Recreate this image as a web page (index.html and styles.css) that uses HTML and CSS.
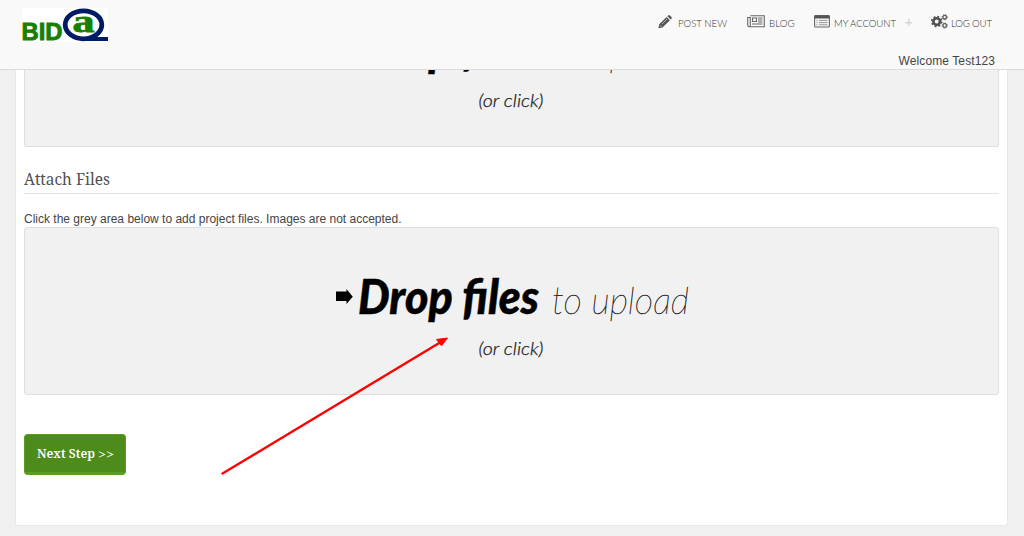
FILE: index.html
```html
<!DOCTYPE html>
<html lang="en">
<head>
<meta charset="utf-8">
<title>BidQA - Attach Files</title>
<link rel="stylesheet" href="styles.css">
</head>
<body>
<header class="header">
  <a class="logo"><svg width="88" height="34" viewBox="0 0 88 34" role="img" aria-label="BIDQ">
    <path class="logo-bg" d="M0 0h86v34H0z"/>
    <text class="logo-bid" x="-.5" y="31.5" textLength="41" lengthAdjust="spacingAndGlyphs">BID</text>
    <ellipse class="logo-ring" cx="61.5" cy="16.8" rx="18.3" ry="14"/>
    <path class="logo-tail" d="M62 29h24v4H62z"/>
    <text class="logo-a" x="50.5" y="23.5" textLength="22" lengthAdjust="spacingAndGlyphs">a</text>
  </svg></a>
  <nav class="nav">
    <a class="nav-item post"><svg width="14" height="14" viewBox="0 0 14 14"><path class="ink" d="M.4 13.3l.8-4L8.6 2l3.3 3.3-7.4 7.3zM9.4 1.2l.8-.8q.9-.6 1.7.1l1.6 1.6q.7.9 0 1.7l-.8.8z"/><path class="cut" d="M1.8 10l1.9 1.9M4 9l5-5"/></svg><svg class="label" width="49" height="14"><text x="0" y="11" textLength="49">POST NEW</text></svg></a>
    <a class="nav-item blog"><svg width="18" height="13" viewBox="0 0 18 13"><path class="line" d="M3.3.7h14v11H2.2q-1.5 0-1.5-1.5V2.5h2.6v7.8q0 1.4-1.1 1.4M5.5 3h4v3.5h-4zM11 3h4.5M11 5h4.5M11 7h4.5M5 9h10.5"/></svg><svg class="label" width="26" height="14"><text x="0" y="11" textLength="25.5">BLOG</text></svg></a>
    <a class="nav-item account"><svg width="16" height="13" viewBox="0 0 16 13"><rect class="line" x=".6" y=".6" width="14.8" height="11.4" rx="1"/><path class="ink" d="M.5.5h15v3H.5z"/><path class="line thin" d="M2.4 5.4h1.2M5 5.4h8.6M2.4 7.6h1.2M5 7.6h8.6M2.4 9.8h1.2M5 9.8h8.6"/></svg><svg class="label" width="63" height="14"><text x="0" y="11" textLength="62">MY ACCOUNT</text></svg><span class="plus"></span></a>
    <a class="nav-item logout"><svg width="17" height="15" viewBox="0 0 17 15"><circle class="gear" cx="5.7" cy="7.5" r="3.3"/><circle class="teeth" cx="5.7" cy="7.5" r="5"/><circle class="gear-small" cx="13.7" cy="3.2" r="1.8"/><circle class="teeth-small" cx="13.7" cy="3.2" r="2.6"/><circle class="gear-small" cx="13.7" cy="11.5" r="1.8"/><circle class="teeth-small" cx="13.7" cy="11.5" r="2.6"/></svg><svg class="label" width="42" height="14"><text x="0" y="11" textLength="41">LOG OUT</text></svg></a>
  </nav>
  <p class="welcome">Welcome Test123</p>
</header>
<main class="panel">
  <div class="dropzone dropzone-top">
    <svg class="message" width="360" height="168" viewBox="332 227 360 168">
      <path d="M336 291.5h10.5V289l6.3 7.7-6.3 7.3v-3H336z"/>
      <text class="drop" x="358" y="314" textLength="181" lengthAdjust="spacingAndGlyphs">Drop files</text>
      <text class="upload" x="552" y="314" textLength="137" lengthAdjust="spacingAndGlyphs">to upload</text>
      <text class="click" x="478.5" y="354.5" textLength="65" lengthAdjust="spacingAndGlyphs">(or click)</text>
    </svg>
  </div>
  <h2 class="title"><svg width="87" height="24"><text x="0" y="17.5" textLength="86" lengthAdjust="spacingAndGlyphs">Attach Files</text></svg></h2>
  <p class="hint">Click the grey area below to add project files. Images are not accepted.</p>
  <div class="dropzone">
    <svg class="message" width="360" height="168" viewBox="332 227 360 168">
      <path d="M336 291.5h10.5V289l6.3 7.7-6.3 7.3v-3H336z"/>
      <text class="drop" x="358" y="314" textLength="181" lengthAdjust="spacingAndGlyphs">Drop files</text>
      <text class="upload" x="552" y="314" textLength="137" lengthAdjust="spacingAndGlyphs">to upload</text>
      <text class="click" x="478.5" y="354.5" textLength="65" lengthAdjust="spacingAndGlyphs">(or click)</text>
    </svg>
  </div>
  <button class="next"><svg width="78" height="22"><text x="0" y="15" textLength="58" lengthAdjust="spacingAndGlyphs">Next Step</text><text class="arrows" x="61" y="16" textLength="16" lengthAdjust="spacingAndGlyphs">&gt;&gt;</text></svg></button>
</main>
<svg class="pointer" width="240" height="150" viewBox="215 330 240 150"><path class="shaft" d="M222.5 473.5L440 342.5"/><path class="tip" d="M447.5 338l-6 7.8-5-6.3z"/></svg>
</body>
</html>
```
FILE: styles.css
```css
* { box-sizing: border-box; }
body {
  margin: 0;
  height: 536px;
  overflow: hidden;
  position: relative;
  background: #f0f0f0;
  color: #444;
  font: 12px/16px "Liberation Sans", Arial, sans-serif;
}
svg { display: block; flex: none; overflow: visible; }
.header {
  height: 70px;
  background: #f9f9f9;
  border-bottom: 1px solid #dcdcdc;
  display: grid;
  grid-template-columns: 1fr auto;
  grid-template-rows: 53px 16px;
}
.logo { padding: 8px 0 0 22px; }
.logo-bg { fill: #fff; }
.logo-bid { font: bold 24px "Liberation Sans", sans-serif; fill: #188000; stroke: #188000; stroke-width: .9; }
.logo-ring { fill: #fff; stroke: #001b65; stroke-width: 4.8; }
.logo-tail { fill: #001b65; }
.logo-a { font: bold 31px "Liberation Serif", serif; fill: #188000; stroke: #188000; stroke-width: .8; }
.nav { display: flex; padding: 14px 31px 0 0; height: 40px; }
.nav-item { display: flex; }
.nav-item > svg:first-child { margin-top: 1px; }
.label { margin: 2px 0 0 6px; font: 300 9.7px Lato, sans-serif; fill: #333; }
.blog { margin-left: 20px; }
.blog .label { margin-left: 4px; }
.account { margin-left: 19px; }
.account .label { margin-left: 4px; }
.logout { margin-left: 19px; }
.logout > svg:first-child { margin-top: 0; }
.logout .label { margin-left: 3px; }
.plus {
  width: 7px;
  height: 7px;
  margin: 5px 0 0 8px;
  background: linear-gradient(#d4d4d4, #d4d4d4) center / 7px 1.5px no-repeat, linear-gradient(#d4d4d4, #d4d4d4) center / 1.5px 7px no-repeat;
}
.ink { fill: #555; }
.cut { stroke: #ddd; stroke-width: .7; fill: none; }
.line { fill: none; stroke: #666; stroke-width: 1.1; }
.thin { stroke: #888; stroke-width: .9; }
.gear { fill: none; stroke: #505050; stroke-width: 2.6; }
.teeth { fill: none; stroke: #505050; stroke-width: 1.5; stroke-dasharray: 2 1.927; }
.gear-small { fill: none; stroke: #606060; stroke-width: 1.3; }
.teeth-small { fill: none; stroke: #606060; stroke-width: 1; stroke-dasharray: 1.1 .942; }
.welcome {
  grid-column: 1 / 3;
  margin: 0;
  padding-right: 29px;
  text-align: right;
  letter-spacing: .1px;
}
.panel {
  margin: 0 16px 0 15px;
  height: 456px;
  padding: 0 8px;
  background: #fff;
  border: solid #e8e8e8;
  border-width: 0 1px 1px;
  border-radius: 0 0 3px 3px;
  display: flex;
  flex-direction: column;
}
.dropzone {
  height: 168px;
  flex: none;
  border: 1px solid #dedede;
  border-radius: 3px;
  background: #f1f1f1;
  display: flex;
  justify-content: center;
  align-items: flex-end;
  overflow: hidden;
}
.dropzone-top { height: 77px; border-top: 0; border-radius: 0 0 3px 3px; }
.message { margin-bottom: -1px; }
.drop { font: italic 900 48px Lato, sans-serif; stroke: #000; stroke-width: .5; }
.upload { font: italic 100 38px Lato, sans-serif; fill: #111; stroke: #222; stroke-width: .4; }
.click { font: italic 300 18.5px Lato, sans-serif; fill: #111; stroke: #222; stroke-width: .25; }
.title {
  margin: 0;
  padding-top: 20px;
  height: 47px;
  border-bottom: 1px solid #e2e2e2;
  font: 400 16px "Noto Serif", "DejaVu Serif Condensed", "DejaVu Serif", serif;
  fill: #505050;
}
.hint { margin: 17px 0 0; height: 16px; letter-spacing: 0; white-space: nowrap; }
.next {
  margin-top: 39px;
  width: 102px;
  height: 41px;
  padding: 8px 0 0 12px;
  display: flex;
  align-items: flex-start;
  border: 1px solid #589c22;
  border-bottom: 3px solid #5a9f20;
  border-radius: 4px;
  background: #4d8c1b;
  fill: #fff;
  font: 600 13px "Noto Serif", "DejaVu Serif Condensed", "DejaVu Serif", serif;
}
.arrows { font-weight: 400; }
.pointer { position: absolute; left: 215px; top: 330px; }
.shaft { stroke: #f00; stroke-width: 2.4; stroke-linecap: round; }
.tip { fill: #f00; stroke: #f00; stroke-width: 1; }
```
